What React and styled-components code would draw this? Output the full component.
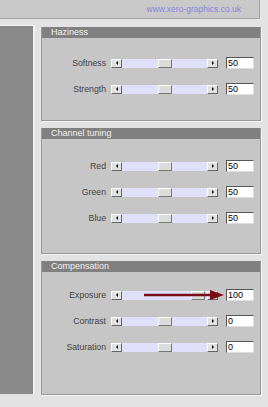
import styled, { createGlobalStyle } from 'styled-components';

const Global = createGlobalStyle`
  html, body {
    margin: 0;
    padding: 0;
    background: #e3e3e3;
    font-family: "Liberation Sans", Arial, sans-serif;
  }
`;

const Page = styled.div`
  width: 268px;
  height: 407px;
  overflow: hidden;
  position: relative;
`;

const TopBar = styled.div`
  width: 260px;
  height: 19px;
  box-sizing: border-box;
  background: #c9c9c9;
  border-right: 1px solid #a4a4a4;
  border-bottom: 1px solid #a4a4a4;
  display: flex;
  justify-content: flex-end;
  align-items: center;
  padding-right: 18px;
`;

const Link = styled.a`
  color: #8a84dc;
  font-size: 8.5px;
  text-decoration: none;
`;

const Main = styled.div`
  display: flex;
  align-items: flex-start;
`;

const Sidebar = styled.div`
  width: 33px;
  height: 368px;
  margin-top: 6px;
  background: #8a8a8a;
  border-top: 1px solid #f4f4f4;
  border-right: 2px solid #f2f2f2;
`;

const Column = styled.div`
  margin-left: 6px;
  margin-top: 8px;
  display: flex;
  flex-direction: column;
  gap: 7px;
  width: 220px;
`;

const Panel = styled.div`
  background: #c6c6c6;
  border: 1px solid #9a9a9a;
  border-top: none;
  box-shadow: 1px 1px 0 #f4f4f4;
`;

const Header = styled.div`
  height: 11px;
  background: #808080;
  color: #f2f2f2;
  font-size: 9px;
  line-height: 11px;
  padding-left: 9px;
`;

const Body = styled.div`
  padding-top: ${(p) => p.$top}px;
  height: ${(p) => p.$h}px;
  box-sizing: border-box;
`;

const Row = styled.div`
  height: 26px;
  display: flex;
  align-items: center;
  position: relative;
`;

const Label = styled.div`
  width: 64px;
  text-align: right;
  font-size: 8.7px;
  color: #444;
  padding-right: 5px;
`;

const Scroll = styled.div`
  width: 107px;
  height: 9px;
  display: flex;
  background: #e0e0fa;
`;

const Btn = styled.div`
  width: 11px;
  height: 9px;
  box-sizing: border-box;
  background: #e2e2e2;
  border: 1px solid;
  border-color: #fff #666 #666 #fff;
  display: flex;
  align-items: center;
  justify-content: center;
  &::after {
    content: '';
    border-top: 2px solid transparent;
    border-bottom: 2px solid transparent;
    ${(p) => (p.$dir === 'left' ? 'border-right: 2px solid #000;' : 'border-left: 2px solid #000;')}
  }
`;

const Track = styled.div`
  flex: 1;
  position: relative;
`;

const Thumb = styled.div`
  position: absolute;
  top: 0;
  width: 14px;
  height: 9px;
  box-sizing: border-box;
  background: #dcdcdc;
  border: 1px solid;
  border-color: #fff #777 #777 #fff;
`;

const Input = styled.div`
  margin-left: 8px;
  width: 28px;
  height: 12px;
  box-sizing: border-box;
  background: #fff;
  border: 1px solid;
  border-color: #555 #ddd #ddd #555;
  font-size: 9px;
  line-height: 10px;
  padding-left: 1px;
  color: #000;
`;

const Arrow = styled.svg`
  position: absolute;
  left: 102px;
  top: 7px;
`;

function Slider({ label, value, pos = 0.5, arrow }) {
  return (
    <Row>
      <Label>{label}</Label>
      <Scroll>
        <Btn $dir="left" />
        <Track>
          <Thumb style={{ left: `calc(${pos * 100}% - ${pos * 14}px)` }} />
        </Track>
        <Btn $dir="right" />
      </Scroll>
      <Input>{value}</Input>
      {arrow && (
        <Arrow width="82" height="12" viewBox="0 0 82 12">
          <line x1="0" y1="6" x2="70" y2="6" stroke="#7a0c18" strokeWidth="2.5" />
          <polygon points="66,1 80,6 66,11" fill="#7a0c18" />
        </Arrow>
      )}
    </Row>
  );
}

export default function App() {
  return (
    <Page>
      <Global />
      <TopBar>
        <Link href="#">www.xero-graphics.co.uk</Link>
      </TopBar>
      <Main>
        <Sidebar />
        <Column>
          <Panel>
            <Header>Haziness</Header>
            <Body $top={12} $h={82}>
              <Slider label="Softness" value="50" />
              <Slider label="Strength" value="50" />
            </Body>
          </Panel>
          <Panel>
            <Header>Channel tuning</Header>
            <Body $top={14} $h={114}>
              <Slider label="Red" value="50" />
              <Slider label="Green" value="50" />
              <Slider label="Blue" value="50" />
            </Body>
          </Panel>
          <Panel>
            <Header>Compensation</Header>
            <Body $top={10} $h={122}>
              <Slider label="Exposure" value="100" pos={0.97} arrow />
              <Slider label="Contrast" value="0" />
              <Slider label="Saturation" value="0" />
            </Body>
          </Panel>
        </Column>
      </Main>
    </Page>
  );
}
